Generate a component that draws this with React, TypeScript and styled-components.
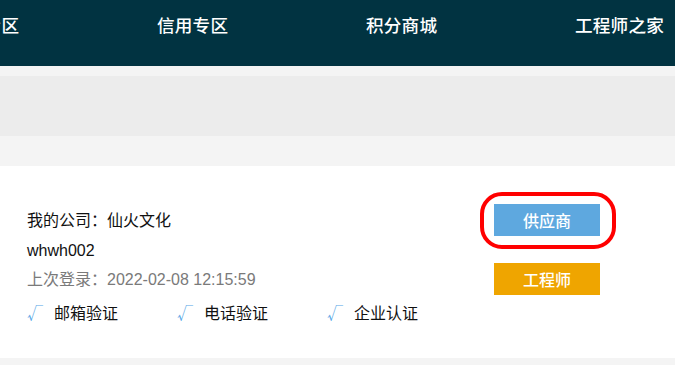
import React from "react";
import styled, { createGlobalStyle } from "styled-components";

const Global = createGlobalStyle`
  html, body { margin: 0; padding: 0; background: #f4f4f4; }
  body { font-family: "Liberation Sans", "Noto Sans CJK SC", sans-serif; }
  * { box-sizing: border-box; }
`;

const Page = styled.div`
  width: 675px;
  height: 365px;
  overflow: hidden;
  background: #f4f4f4;
`;

const Header = styled.header`
  height: 66px;
  background: #013341;
  overflow: hidden;
`;

const Nav = styled.nav`
  display: flex;
  margin-left: -52px;
  height: 48px;
  align-items: center;
`;

const NavItem = styled.a`
  flex: 0 0 209px;
  color: #ffffff;
  font-family: "Noto Sans CJK SC", sans-serif;
  font-size: 17.6px;
  font-weight: 500;
  letter-spacing: 0.2px;
  text-decoration: none;
  white-space: nowrap;
`;

const Gap = styled.div<{ $h: number; $bg: string }>`
  height: ${(p) => p.$h}px;
  background: ${(p) => p.$bg};
`;

const Card = styled.section`
  height: 192px;
  background: #ffffff;
  display: flex;
  justify-content: space-between;
  padding: 40px 75px 0 27px;
`;

const Info = styled.div`
  display: flex;
  flex-direction: column;
`;

const Line = styled.div<{ $muted?: boolean }>`
  height: 29.6px;
  line-height: 29.6px;
  font-size: 16px;
  color: ${(p) => (p.$muted ? "#7a7a7a" : "#111111")};
  white-space: nowrap;
`;

const Checks = styled.div`
  display: flex;
  margin-top: 2px;
  height: 30px;
  align-items: center;
`;

const CheckItem = styled.div`
  flex: 0 0 150px;
  display: flex;
  align-items: center;
  font-size: 16px;
  color: #111111;
  white-space: nowrap;
`;

const Tick = styled.span`
  width: 27px;
  color: #55a6e6;
  font-family: "Noto Sans CJK SC", sans-serif;
  font-size: 16px;
  font-weight: 300;
  line-height: 1;
`;

const Actions = styled.div`
  display: flex;
  flex-direction: column;
  gap: 27px;
  margin-top: -2px;
`;

const Highlight = styled.div`
  position: relative;
`;

const Ring = styled.span`
  position: absolute;
  left: -14px;
  top: -12px;
  right: -16px;
  bottom: -13px;
  border: 4.5px solid #ff0000;
  border-radius: 22px;
  pointer-events: none;
`;

const RoleButton = styled.button<{ $bg: string }>`
  display: block;
  width: 106px;
  height: 32px;
  border: 0;
  padding: 0;
  background: ${(p) => p.$bg};
  color: #ffffff;
  font-family: "Noto Sans CJK SC", sans-serif;
  font-size: 16px;
  font-weight: 500;
  cursor: pointer;
`;

const navItems = ["企业专区", "信用专区", "积分商城", "工程师之家"];
const checks = ["邮箱验证", "电话验证", "企业认证"];

export default function App() {
  return (
    <>
      <Global />
      <Page>
        <Header>
          <Nav>
            {navItems.map((n) => (
              <NavItem key={n}>{n}</NavItem>
            ))}
          </Nav>
        </Header>
        <Gap $h={10} $bg="#f4f4f4" />
        <Gap $h={60} $bg="#ececec" />
        <Gap $h={30} $bg="#f4f4f4" />
        <Card>
          <Info>
            <Line>我的公司：仙火文化</Line>
            <Line>whwh002</Line>
            <Line $muted>上次登录：2022-02-08 12:15:59</Line>
            <Checks>
              {checks.map((c) => (
                <CheckItem key={c}>
                  <Tick>√</Tick>
                  {c}
                </CheckItem>
              ))}
            </Checks>
          </Info>
          <Actions>
            <Highlight>
              <RoleButton $bg="#5ea8df">供应商</RoleButton>
              <Ring />
            </Highlight>
            <RoleButton $bg="#efa500">工程师</RoleButton>
          </Actions>
        </Card>
      </Page>
    </>
  );
}
